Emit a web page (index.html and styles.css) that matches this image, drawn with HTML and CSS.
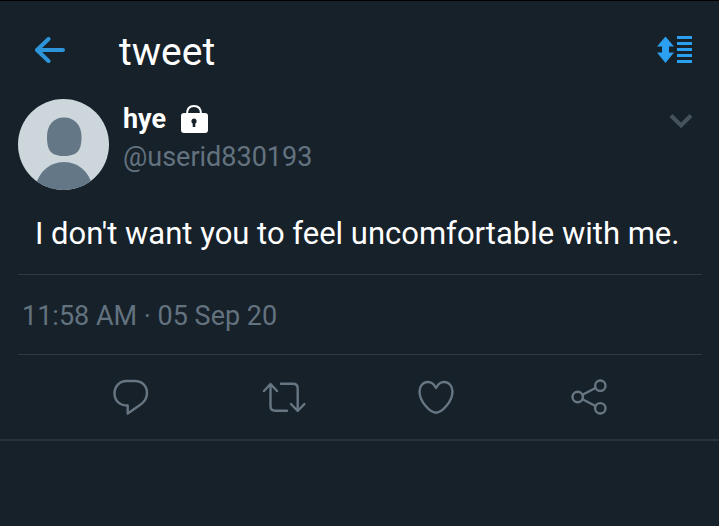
FILE: index.html
```html
<!DOCTYPE html>
<html lang="en">
<head>
<meta charset="UTF-8">
<meta name="viewport" content="width=device-width,initial-scale=1">
<title>tweet</title>
<link rel="stylesheet" href="styles.css">
</head>
<body>
<header class="topbar">
<button class="back" aria-label="Back">
<svg width="30" height="26" viewBox="0 0 30 26"><path d="M13.500 2 2 13l11.500 11M3 13h25"/></svg>
</button>
<h1>tweet</h1>
<button class="sort" aria-label="Sort replies">
<svg width="36" height="28" viewBox="0 0 36 28"><path d="M8.500.5 17 10.500h-5v6h5L8.500 27 0 16.500h5v-6H0zM20 0h15v3H20zM20 6h15v3H20zM20 12h15v3H20zM20 18h15v3H20zM20 24h15v3H20z"/></svg>
</button>
</header>

<main>
<article class="tweet">
<div class="author">
<svg class="avatar" viewBox="0 0 91 91" role="img" aria-label="hye">
<clipPath id="round"><circle cx="45.500" cy="45.500" r="45.500"/></clipPath>
<g clip-path="url(#round)">
<path fill="#ccd6db" d="M0 0h91v91H0z"/>
<path fill="#647786" d="M46 18.500c11 0 17.500 8 17.500 19.500 0 13-4 19-17.500 19S29 51 29 38c0-11.500 6-19.500 17-19.500z"/>
<path fill="#647786" d="M17 91c2-17 14-28 29-28s27 11 29 28z"/>
</g>
</svg>
<div class="names">
<div class="name">hye
<svg width="28" height="30" viewBox="0 0 28 30"><path class="shackle" d="M7 10C7 4.500 9.500 2 14 2s7 2.500 7 8"/><rect x="1" y="9" width="27" height="20" rx="3"/><path class="keyhole" d="M14 14.500a2.800 2.800 0 0 1 1.300 5.200V23h-2.600v-3.300a2.800 2.800 0 0 1 1.300-5.200z"/></svg>
</div>
<div class="handle">@userid830193</div>
</div>
<button class="more" aria-label="More">
<svg width="24" height="16" viewBox="0 0 24 16"><path d="m2 2.500 10 10 10-10"/></svg>
</button>
</div>
<p class="text">I don't want you to feel uncomfortable with me.</p>
<div class="time">11:58 AM · 05 Sep 20</div>
</article>

<div class="actions">
<button aria-label="Reply">
<svg width="44" height="44" viewBox="0 0 44 44"><path d="M17.500 5H26c7 0 12 5 12 12 0 5-2.500 9-7 12l-12.300 8.500v-8C11 29.500 5.500 25 5.500 17.500 5.500 10.500 10.500 5 17.500 5z"/></svg>
</button>
<button aria-label="Retweet">
<svg width="44" height="44" viewBox="0 0 44 44"><path d="m2 15 6.500-7 6.500 7M8.500 8.500V30q0 4.700 4.700 4.700H25M19 7.800h12q4.700 0 4.700 4.700v22M29 28l6.700 7 6.700-7"/></svg>
</button>
<button aria-label="Like">
<svg width="44" height="44" viewBox="0 0 44 44"><path d="M22 12c-2-4-4.500-6-8-6-5 0-8.500 4-8.500 9.500C5.500 25.500 16 36.700 22 36.700s16.500-11.200 16.500-21.200C38.500 10 35 6 30 6c-3.500 0-6 2-8 6z"/></svg>
</button>
<button aria-label="Share">
<svg width="44" height="44" viewBox="0 0 44 44"><circle cx="10.700" cy="21" r="5.200"/><circle cx="33.300" cy="9.700" r="5.200"/><circle cx="33.300" cy="32.300" r="5.200"/><path d="M15.500 18.700 28.500 12M15.500 23.300l13 6.700"/></svg>
</button>
</div>
</main>
</body>
</html>
```
FILE: styles.css
```css
*{box-sizing:border-box}
body{margin:0;min-height:100vh;font-family:Roboto,sans-serif;background:#17212a;color:#fff;border-top:1px solid #000}
button{display:flex;padding:0;border:none;background:none;cursor:pointer}
svg{display:block}
.topbar{display:flex;align-items:center;height:98px;padding:0 26px 0 35px}
.topbar h1{flex:1;margin:0 0 0 54px;padding-top:4px;font-size:39px;line-height:46px;font-weight:400}
.back svg{fill:none;stroke:#2f95da;stroke-width:4;stroke-linecap:round;stroke-linejoin:round}
.sort svg{fill:#2b9ff0}
.tweet{padding:0 17px 0 18px}
.author{display:flex;align-items:flex-start}
.avatar{width:91px;height:91px;flex:none}
.names{flex:1;margin-left:14px;padding-top:1px}
.name{display:flex;align-items:center;gap:14px;font-size:27px;line-height:38px;font-weight:700}
.name svg{fill:#fff}
.name .shackle{fill:none;stroke:#fff;stroke-width:2}
.name .keyhole{fill:#17212a}
.handle{font-size:27px;line-height:38px;color:#63727f}
.more{margin:14px 9px 0 0}
.more svg{fill:none;stroke:#46525c;stroke-width:4}
.text{margin:0;padding:26px 17px 22px;font-size:31px;line-height:36px;border-bottom:1px solid #2e3a44}
.time{padding:24px 4px 20px;font-size:27px;line-height:35px;color:#63727f;border-bottom:1px solid #2e3a44}
.actions{display:flex;justify-content:space-around;align-items:center;padding:21px 54px 19px 55px;border-bottom:2px solid #28333e}
.actions svg{fill:none;stroke:#667682;stroke-width:2.400;stroke-linecap:round;stroke-linejoin:round}
```
